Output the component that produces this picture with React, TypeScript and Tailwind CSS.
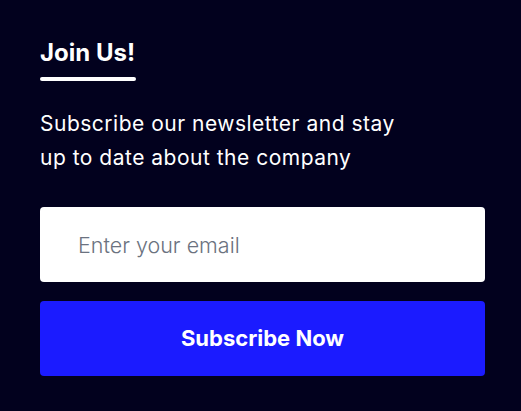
import React from "react";

export default function App() {
  return (
    <div className="w-[521px] h-[411px] bg-[#02011e] px-10 pt-[37px] font-['Inter',sans-serif]">
      {/* Heading with underline bar */}
      <div className="inline-block">
        <h2 className="text-[24px] leading-[32px] font-bold text-white">Join Us!</h2>
        <div className="mt-[8px] h-1 w-[96px] bg-white rounded-full"></div>
      </div>

      <p className="mt-[26px] text-[21px] leading-[34px] text-white tracking-[0.5px] max-w-[370px]">
        Subscribe our newsletter and stay up to date about the company
      </p>

      <form className="mt-[32px] flex flex-col gap-[19px] w-[445px]" onSubmit={(e) => e.preventDefault()}>
        <input
          type="email"
          placeholder="Enter your email"
          className="h-[75px] w-full rounded bg-white px-[38px] text-[21.5px] text-gray-700 placeholder:text-[#6b7280] placeholder:font-light outline-none"
        />
        <button
          type="submit"
          className="h-[75px] w-full rounded bg-[#1b1bff] text-white text-[22px] font-bold"
        >
          Subscribe Now
        </button>
      </form>
    </div>
  );
}
